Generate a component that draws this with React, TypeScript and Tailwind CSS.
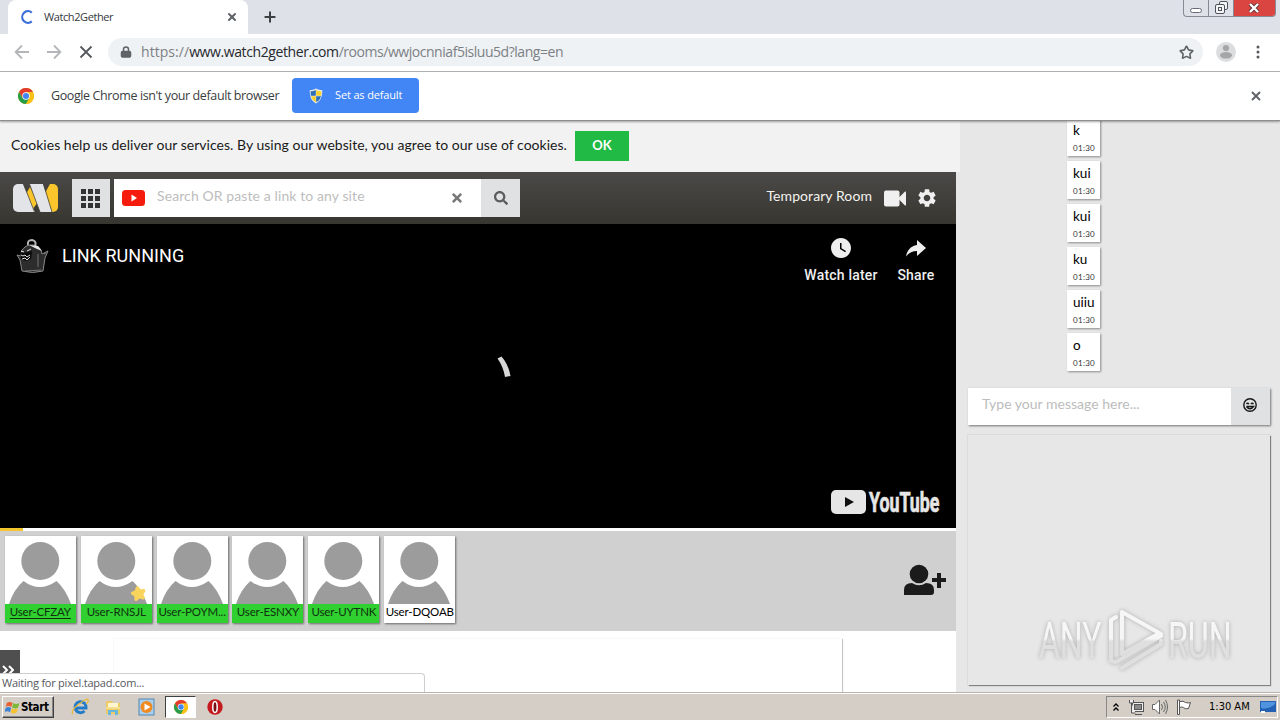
import { Lock, Plus, Star, X } from 'lucide-react';
import { FaSearch, FaTimes } from 'react-icons/fa';
import { MdSettings, MdWatchLater } from 'react-icons/md';

interface RoomUser {
  name: string;
  active: boolean;
  self?: boolean;
  starred?: boolean;
}

const users: RoomUser[] = [
  { name: 'User-CFZAY', active: true, self: true },
  { name: 'User-RNSJL', active: true, starred: true },
  { name: 'User-POYM...', active: true },
  { name: 'User-ESNXY', active: true },
  { name: 'User-UYTNK', active: true },
  { name: 'User-DQOAB', active: false },
];

const messages = ['k', 'kui', 'kui', 'ku', 'uiiu', 'o'];

const ChromeLogo = ({ className }: { className: string }) => (
  <svg viewBox="0 0 24 24" className={className}>
    <circle cx="12" cy="12" r="12" fill="#fbc116" />
    <path d="M12 6h10.4A12 12 0 0 0 1.6 6L6.8 15z" fill="#e33b2e" />
    <path d="M1.6 6A12 12 0 0 0 12 24l5.2-9L12 12 6.8 15z" fill="#2a9d4b" />
    <path d="M22.4 6A12 12 0 0 1 12 24l5.2-9a6 6 0 0 0-5.2-9z" fill="#fbc116" />
    <circle cx="12" cy="12" r="5.600" fill="#fff" />
    <circle cx="12" cy="12" r="4.600" fill="#4384f3" />
  </svg>
);

const Shield = () => (
  <svg viewBox="0 0 16 16" className="h-4 w-4">
    <path d="M8 .6c2 1.3 4.200 1.700 6.300 1.700 0 6-1.300 10.500-6.300 13.100C3 12.800 1.700 8.300 1.700 2.300 3.800 2.300 6 1.900 8 .6z" fill="#e8edf2" />
    <path d="M7.800 2v5.800H2.900C2.700 6.500 2.600 5 2.600 3.300 4.500 3.200 6.200 2.900 7.800 2z" fill="#2c6fb5" />
    <path d="M8.200 2v5.800h4.900c.2-1.300.3-2.800.3-4.500C11.500 3.200 9.800 2.900 8.200 2z" fill="#f6d12e" />
    <path d="M7.800 8.200v6C5.200 12.700 3.700 10.800 3 8.200z" fill="#f6d12e" />
    <path d="M8.200 8.200v6c2.600-1.500 4.100-3.400 4.800-6z" fill="#2c6fb5" />
  </svg>
);

const NavArrow = ({ className = '' }: { className?: string }) => (
  <svg viewBox="0 0 16 16" className={`h-4 w-4 ${className}`} fill="none" stroke="#b4b6b9" strokeWidth="1.8">
    <path d="M15 8H2M8 1.500 1.600 8 8 14.500" />
  </svg>
);

const TabStrip = () => (
  <div className="flex h-[34px] shrink-0 items-start bg-[#dee1e8] pl-2">
    <div className="flex h-[34px] w-60 items-center rounded-t-lg bg-white pl-3 pr-[10px]">
      <svg viewBox="0 0 14 14" className="h-[14px] w-[14px]" fill="none" stroke="#3b6fd8" strokeWidth="2.200">
        <path d="M11.800 2.600A5.800 5.800 0 1 0 11.800 11.400" />
      </svg>
      <span className="ml-[10px] flex-1 text-[11px] leading-4 tracking-[-0.4px] text-[#35383c]">Watch2Gether</span>
      <X className="h-3 w-3 text-[#5f6368]" strokeWidth={4} />
    </div>
    <Plus className="ml-[14px] mt-[9px] h-4 w-4 text-[#3c4043]" strokeWidth={3} />
    <div className="ml-auto mr-1 flex h-[17px] w-[93px] overflow-hidden rounded-b border border-t-0 border-[#858a93]">
      <div className="flex w-[25px] items-end justify-center border-r border-[#858a93] pb-[3px]">
        <div className="h-[5px] w-3 rounded-sm border border-[#666b75] bg-white" />
      </div>
      <div className="flex w-[25px] items-center justify-center border-r border-[#858a93]">
        <svg viewBox="0 0 13 13" className="-mt-px h-[13px] w-[13px]" fill="#f4f5f7" stroke="#4d525c">
          <rect x="4.500" y=".5" width="8" height="8" rx="1.500" />
          <rect x=".5" y="3.500" width="9" height="9" rx="1.500" />
          <rect x="3.500" y="6.500" width="3" height="3" />
        </svg>
      </div>
      <div className="flex flex-1 items-center justify-center bg-[#da4542]">
        <svg viewBox="0 0 12 10" className="-ml-px h-[10px] w-3">
          <path d="m2 1 8 8m0-8L2 9" stroke="#5c3236" strokeWidth="4" />
          <path d="m2 1 8 8m0-8L2 9" stroke="#fff" strokeWidth="2.400" />
        </svg>
      </div>
    </div>
  </div>
);

const AddressBar = () => (
  <div className="flex h-[38px] shrink-0 items-center border-b border-[#b3b4b5] bg-white pb-px pl-[14px]">
    <NavArrow />
    <NavArrow className="ml-4 rotate-180" />
    <svg viewBox="0 0 14 14" className="ml-[17px] h-[14px] w-[14px]" stroke="#54575b" strokeWidth="1.800">
      <path d="m1.500 1.500 11 11m0-11-11 11" />
    </svg>
    <div className="ml-[15px] flex h-7 w-[1095px] items-center rounded-full bg-[#eff2f5] pl-3 pr-[9px]">
      <Lock className="h-3 w-3 text-[#5f6368] [&>rect]:fill-[#5f6368]" strokeWidth={3} />
      <span className="ml-[9px] flex-1 pb-px text-[14px] leading-5 text-[#7c8084]">
        <span className="tracking-[0.050px]">https://</span>
        <span className="tracking-[-0.4px] text-[#25282c]">www.watch2gether.com</span>
        <span className="tracking-[-0.460px]">/rooms/wwjocnniaf5isluu5d?lang=en</span>
      </span>
      <Star className="h-[15px] w-[15px] text-[#5f6368]" strokeWidth={2.6} />
    </div>
    <svg viewBox="0 0 20 20" className="ml-[13px] h-5 w-5">
      <circle cx="10" cy="10" r="10" fill="#dcdddf" />
      <circle cx="10" cy="6" r="3.100" fill="#a5a6a8" />
      <ellipse cx="10" cy="13.300" rx="6" ry="3.300" fill="#a5a6a8" />
    </svg>
    <svg viewBox="0 0 4 14" className="ml-5 h-[14px] w-1" fill="#55585c">
      <circle cx="2" cy="2" r="1.500" />
      <circle cx="2" cy="7" r="1.500" />
      <circle cx="2" cy="12" r="1.500" />
    </svg>
  </div>
);

const DefaultBrowserBar = () => (
  <div className="z-10 flex h-[49px] shrink-0 items-center border-b border-[#8e8e90] bg-white pb-px pl-[18px] pr-[17px] shadow-[0_1px_2px_rgba(0,0,0,0.35)]">
    <ChromeLogo className="h-4 w-4" />
    <span className="ml-[17px] w-[241px] whitespace-nowrap pt-px text-[12.500px] tracking-[-0.390px] text-[#3a3d40]">
      Google Chrome isn't your default browser
    </span>
    <button className="flex h-[35px] w-[127px] items-center rounded bg-[#4285f4] pl-4 text-[11px] text-white">
      <Shield />
      <span className="ml-[11px] tracking-[-0.150px]">Set as default</span>
    </button>
    <X className="ml-auto h-[14px] w-[14px] text-[#5f6368]" strokeWidth={3.2} />
  </div>
);

const CookieBar = () => (
  <div className="flex h-[51px] w-[960px] items-center bg-[#f2f2f2] pb-[2px] pl-[11px] font-['Lato',sans-serif]">
    <span className="w-[564px] whitespace-nowrap pb-[2px] text-[14px] tracking-[0.030px] text-[#1a1a1a]">
      Cookies help us deliver our services. By using our website, you agree to our use of cookies.
    </span>
    <button className="h-[30px] w-[54px] bg-[#21ba45] text-[13px] font-bold text-white">OK</button>
  </div>
);

const Header = () => (
  <div className="flex h-[52px] items-center bg-linear-to-b from-[#4b4947] to-[#373630] pl-[13px] font-['Lato',sans-serif]">
    <svg viewBox="0 0 46 28" className="h-7 w-[46px]">
      <path d="M17 3 13 10l6 16 6-8z" fill="#fac62c" />
      <path d="M37 0h3a5 5 0 0 1 5 5v18a5 5 0 0 1-5 5h-1L32 9z" fill="#fac62c" />
      <path d="M0 5a5 5 0 0 1 5-5h5l12 28H5a5 5 0 0 1-5-5z" fill="#e3e4e8" />
      <path d="M16.500 0H30l9 28H27z" fill="#e3e4e8" />
      <path d="m10.500 0 11 28M16.500 0 27 28M30.500 0l8.500 28" fill="none" stroke="#4a4539" strokeWidth=".8" />
    </svg>
    <div className="ml-[13px] flex h-[38px] w-[38px] items-center justify-center bg-[#e0e1e2] pr-px">
      <div className="grid grid-cols-3 gap-[2px]">
        {Array.from({ length: 9 }, (_, i) => (
          <div key={i} className="h-[5px] w-[5px] bg-[#333]" />
        ))}
      </div>
    </div>
    <div className="ml-1 flex h-[38px] w-[367px] items-center bg-white pl-2 pr-[17px]">
      <svg viewBox="0 0 23 16" className="h-4 w-[23px]">
        <rect width="23" height="16" rx="3.500" fill="#f61c0d" />
        <path d="m9.500 4.500 5.500 3.500-5.500 3.500z" fill="#fff" />
      </svg>
      <span className="mb-[5px] ml-3 flex-1 text-[14px] tracking-[0.1px] text-[#bdbdbd]">
        Search OR paste a link to any site
      </span>
      <FaTimes className="h-[14px] w-[14px] text-[#777]" />
    </div>
    <div className="flex h-[38px] w-[39px] items-center justify-center bg-[#e0e1e2]">
      <FaSearch className="h-[14px] w-[14px] text-[#5c5c5d]" />
    </div>
    <span className="mb-[5px] ml-auto whitespace-nowrap text-[14px] tracking-[0.080px] text-[#f3f3ef]">Temporary Room</span>
    <svg viewBox="0 0 22 17" className="ml-3 h-[17px] w-[22px]" fill="#f0f0f0">
      <rect y=".5" width="15.500" height="16" rx="2" />
      <path d="m14 8.500 7-7q1-.5 1 1v12q0 1.500-1 1z" />
    </svg>
    <MdSettings className="ml-[10px] mr-[18px] h-[22px] w-[22px] text-[#f0f0f0]" />
  </div>
);

const Player = () => (
  <div className="flex h-[304px] flex-col bg-black font-['Roboto',sans-serif] text-[#eee]">
    <div className="flex h-[130px] items-start pl-[14px]">
      <svg viewBox="0 0 36 38" className="mt-[13px] h-[38px] w-9">
        <path d="M7 15q4-8 12-7 8 1 9 9l6-3-3 7-2 13q-10 3-21 0L6 23l-3-5 4 1z" fill="#2c2c2c" stroke="#8a8a8a" strokeWidth="1" />
        <path d="M14 8q-1-5 4-5 5 1 3 6" fill="none" stroke="#b5b5b5" strokeWidth="2" />
        <path d="M6 15q4 2 12-1l-1 8-5 2-5-2z" fill="#090909" />
        <path d="m7 14 3 1m3-1 4-2M7 18l2 1 2-1 2 2 3-2M8 22l3-1 2 2 3-3" fill="none" stroke="#ddd" strokeWidth="1" />
        <path d="m15 8 9 1 4 5-5-2z" fill="#e7e7e7" />
        <path d="M24 17v13m-13 4 16-1M30 17l2-1" stroke="#777" fill="none" />
      </svg>
      <span className="ml-3 mt-5 text-[18px] leading-6 tracking-[0.050px] text-white">LINK RUNNING</span>
      <div className="ml-auto mt-3 flex w-[90px] flex-col items-center">
        <MdWatchLater className="h-6 w-6" />
        <span className="mt-[5px] whitespace-nowrap text-[14px] leading-5 font-medium tracking-[0.2px]">Watch later</span>
      </div>
      <div className="mr-[10px] mt-3 flex w-[60px] flex-col items-center">
        <svg viewBox="0 0 24 24" className="h-6 w-6" fill="#eee">
          <path d="M13 4v5C6 10 3 15 2 20.500 5 16.500 8.500 15 13 15v5l9-8z" />
        </svg>
        <span className="mt-[5px] text-[14px] leading-5 font-medium tracking-[0.2px]">Share</span>
      </div>
    </div>
    <svg viewBox="0 0 16 24" className="ml-[496px] h-6 w-4 shrink-0" fill="#d8d8d8">
      <path d="M1.500 4.500 5.500 2.500Q12.500 10.500 14.500 22L9 23Q7.500 13 1.500 4.500z" />
    </svg>
    <div className="mt-auto flex items-center justify-end pb-2 pr-3">
      <svg viewBox="0 0 114 36" className="h-9 w-[114px]">
        <rect x="1" y="6" width="35" height="24" rx="5" fill="#e6e6e6" />
        <path d="m15 13 9 5-9 5z" fill="#111" />
        <text transform="translate(39 28) scale(0.660 1)" fontSize="27" fontWeight="700" fill="#e6e6e6" stroke="#e6e6e6" strokeWidth=".7">YouTube</text>
      </svg>
    </div>
  </div>
);

const UserCard = ({ user }: { user: RoomUser }) => (
  <div className="relative flex h-[87px] w-[71px] flex-col bg-white shadow-[1px_1px_2px_rgba(0,0,0,0.5)]">
    <svg viewBox="0 0 71 68" className="h-[68px] w-[71px]" fill="#9c9c9c">
      <circle cx="35.300" cy="25" r="19" />
      <path d="M4 68Q9 53 18.500 45q16 12 33 0 9 8 14.500 23z" />
    </svg>
    {user.starred && (
      <Star className="absolute bottom-[22px] right-[6px] h-[15px] w-[15px] -rotate-12 fill-[#f9d45c] text-[#f9d45c]" strokeWidth={4} />
    )}
    <div
      className={`flex h-[19px] justify-center whitespace-nowrap text-[11.500px] leading-[16px] tracking-[-0.150px] ${
        user.active ? 'bg-[#2fd02f] text-[#10300f]' : 'bg-white text-black'
      } ${user.self ? 'underline underline-offset-2' : ''}`}
    >
      {user.name}
    </div>
  </div>
);

const UserList = () => (
  <div className="flex h-[100px] items-start gap-[4.900px] bg-[#d0d0d0] pl-[4.800px] pt-[5px] font-['Lato',sans-serif]">
    {users.map((user) => (
      <UserCard key={user.name} user={user} />
    ))}
    <svg viewBox="0 0 42 31" className="ml-auto mr-[10px] mt-[28px] h-[31px] w-[42px]" fill="#1b1b1b">
      <circle cx="15" cy="10" r="9.300" />
      <path d="M0 31v-5q0-7 8-7 7 4.500 14 0 8 0 8 7v2q0 3-3 3zM33 9h4v5h5v4h-5v6h-4v-6h-5v-4h5z" />
    </svg>
  </div>
);

const ChatMessage = ({ text }: { text: string }) => (
  <div className="h-[38px] w-[33px] bg-white pl-[6px] shadow-[1px_1px_2px_rgba(0,0,0,0.4)]">
    <div className="pt-[2px] text-[13.500px] leading-5 text-black">{text}</div>
    <div className="pt-[3px] text-[8px] leading-[10px] tracking-[0.3px] text-[#333]">01:30</div>
  </div>
);

const Watermark = () => (
  <svg viewBox="0 0 204 70" className="h-[70px] w-[204px] drop-shadow-[0_0_2px_rgba(0,0,0,0.25)]">
    <defs>
      <linearGradient id="fade" x1="0" y1="0" x2="0" y2="70" gradientUnits="userSpaceOnUse">
        <stop offset="0.480" stopColor="#f6f6f6" />
        <stop offset="0.520" stopColor="#dfdfdf" />
      </linearGradient>
      <linearGradient id="fadeText" x1="0" y1="-53" x2="0" y2="17" gradientUnits="userSpaceOnUse">
        <stop offset="0.480" stopColor="#f6f6f6" />
        <stop offset="0.520" stopColor="#dfdfdf" />
      </linearGradient>
    </defs>
    <g fill="url(#fadeText)" fontFamily="Roboto, sans-serif" fontSize="50">
      <text transform="translate(5 53) scale(0.640 1)">ANY</text>
      <text transform="translate(134 53) scale(0.645 1)">RUN</text>
    </g>
    <g fill="none" stroke="url(#fade)" strokeWidth="4" strokeLinejoin="round" strokeLinecap="round">
      <path d="M82 12 77 15v41l5 1 45-26" />
      <path d="M127 29 88 7v42l36-20" />
      <path d="m88 63 39-24v-3" />
    </g>
  </svg>
);

const Sidebar = () => (
  <div className="flex w-[320px] flex-col bg-[#e7e7e7] pl-2 font-['Lato',sans-serif]">
    <div className="-mt-[3px] flex flex-col gap-[5px] pl-[99px]">
      {messages.map((text, i) => (
        <ChatMessage key={i} text={text} />
      ))}
    </div>
    <div className="mt-[17px] flex h-[37px] w-[302px] bg-white shadow-[1px_1px_2px_rgba(0,0,0,0.5)]">
      <span className="flex-1 pl-[14px] text-[14px] leading-[32px] tracking-[0.010px] text-[#bcbcbc]">Type your message here...</span>
      <div className="flex w-[39px] items-center justify-center bg-[#e0e1e2] pb-[4px] pr-[2px]">
        <svg viewBox="0 0 14 14" className="h-[14px] w-[14px]" fill="none" stroke="#171717" strokeWidth="1.400">
          <circle cx="7" cy="7" r="6.200" />
          <path d="M3.500 6q1-1.500 2.500 0M8 6q1-1.500 2.500 0M3.500 8.500h7Q7 13 3.500 8.500" />
        </svg>
      </div>
    </div>
    <div className="mt-[10px] flex h-[250px] w-[302px] items-end bg-[#e7e7e7] pb-[10px] pl-[66px] shadow-[0_0_1px_rgba(0,0,0,0.3),1px_1px_1px_rgba(0,0,0,0.4)]">
      <Watermark />
    </div>
  </div>
);

const BelowFold = () => (
  <div className="relative flex h-[61px] items-end bg-white">
    <div className="mb-[17px] flex h-[25px] w-5 items-end bg-[#4f4f50] pl-[2px]">
      <svg viewBox="0 0 12 10" className="h-[10px] w-3" fill="none" stroke="#fff" strokeWidth="2">
        <path d="m1 1 4 4-4 4m6-8 4 4-4 4" />
      </svg>
    </div>
    <div className="ml-[94px] h-[53px] w-[729px] border-r border-[#c4c4c4] bg-white shadow-[0_0_2px_rgba(0,0,0,0.08)]" />
    <div className="absolute bottom-0 left-0 h-[19px] w-[425px] rounded-tr border-r border-t border-[#cfcfcf] bg-white pl-[2px] text-[11px] leading-[18px] tracking-[-0.240px] text-[#55585b]">
      Waiting for pixel.tapad.com...
    </div>
  </div>
);

const Taskbar = () => (
  <div className="flex h-7 shrink-0 items-center border-t border-[#b9b5ae] bg-[#d4cec6] font-['DejaVu_Sans_Condensed','DejaVu_Sans',sans-serif] shadow-[inset_0_1px_0_#fff]">
    <button className="ml-[2px] mt-px flex h-[22px] w-[52px] items-center border border-b-[#404040] border-l-white border-r-[#404040] border-t-white pl-[2px] text-[11.500px] font-bold text-black shadow-[inset_-1px_-1px_0_#888]">
      <svg viewBox="0 0 16 16" className="h-[15px] w-[15px]">
        <path d="M2 3q3-2 6 0L6.800 7.500q-3-2-6 0z" fill="#e86032" />
        <path d="M8.800 3.300q3 2 6.500 0L14 8q-3 2-6.500 0z" fill="#7db83a" />
        <path d="M.6 8.500q3-2 6 0L5.300 13q-3-2-6 0z" fill="#3e83d5" />
        <path d="M7.300 8.800q3 2 6.500 0l-1.300 4.500q-3 2-6.500 0z" fill="#f5c32f" />
      </svg>
      <span className="ml-px pt-px tracking-[-0.4px]">Start</span>
    </button>
    <svg viewBox="0 0 18 18" className="ml-[17px] h-[18px] w-[18px]" fill="none">
      <path d="M4 10h11A5.500 5.500 0 1 0 13.500 13" stroke="#227ac9" strokeWidth="3" />
      <path d="M2 16Q-1 13 8 6t9-4q1 2-2 4" stroke="#e8b93a" strokeWidth="1.300" />
    </svg>
    <svg viewBox="0 0 18 18" className="ml-[15px] h-[18px] w-[18px]">
      <path d="M2 3h6l1 2h7v11H2z" fill="#eacb68" />
      <path d="M4 5h10v4H4z" fill="#fff6cf" />
      <path d="M2 9h14v2H2z" fill="#f6df91" />
      <path d="M4 17v-5h10v5h-3v-3H7v3z" fill="#68b7df" />
    </svg>
    <svg viewBox="0 0 18 18" className="ml-[16px] h-[18px] w-[18px]">
      <rect x="1" y="1" width="15" height="16" fill="#a9cfee" stroke="#5286b2" />
      <circle cx="8.500" cy="9" r="6" fill="#ef8b20" />
      <path d="m6.500 5.500 6 3.500-6 3.500z" fill="#fff" />
    </svg>
    <div className="ml-[9px] flex h-[22px] w-[31px] items-center justify-center border border-b-white border-l-[#404040] border-r-white border-t-[#404040] bg-white">
      <ChromeLogo className="h-[14px] w-[14px]" />
    </div>
    <svg viewBox="0 0 16 16" className="ml-[11px] h-4 w-4">
      <circle cx="8" cy="8" r="7.700" fill="#c4191d" />
      <ellipse cx="8" cy="8" rx="2.200" ry="5.500" fill="#761012" stroke="#fff" strokeWidth="1.500" />
    </svg>
    <div className="ml-auto mr-[2px] mt-px flex h-[22px] w-[172px] items-center border border-b-white border-l-[#888] border-r-white border-t-[#888] pl-[6px] text-[11px] text-black">
      <svg viewBox="0 0 6 8" className="h-2 w-[6px]" fill="none" stroke="#000" strokeWidth="1.300">
        <path d="m.5 3.500 2.500-2.500 2.500 2.500m-5 4L3 5l2.500 2.500" />
      </svg>
      <svg viewBox="0 0 16 16" className="ml-[9px] h-4 w-4" fill="#eee" stroke="#555">
        <rect x="4.500" y="3.500" width="11" height="9" />
        <rect x="6.500" y="5.500" width="7" height="5" fill="#8b8b8b" />
        <path d="M7 15.500h7M1.500 1v3h4V1m-2 3v10h4" />
      </svg>
      <svg viewBox="0 0 16 16" className="ml-2 h-4 w-4" fill="#fff" stroke="#666">
        <path d="M.5 5.500H3L7.500 1v14L3 10.500H.5z" />
        <path d="M9.500 5q2 3 0 6m2-8q3.500 5 0 10m2-12q4 7 0 14" fill="none" />
      </svg>
      <svg viewBox="0 0 16 16" className="ml-2 h-4 w-4" fill="#fff" stroke="#555">
        <path d="M3.500 2.500q4-1 6 1 3 1 5 0l-2 6q-4 1-5-1-2-1-4 0zM1.500 1v14.500h2V1z" />
      </svg>
      <span className="ml-[17px] whitespace-nowrap pt-px">1:30 AM</span>
      <svg viewBox="0 0 16 14" className="ml-auto mr-px h-[14px] w-4">
        <rect width="16" height="11" y="1" fill="#2461b4" />
        <path d="M1 2h14v2Q8 10 1 8z" fill="#5094df" />
        <path d="M1 11h4v2H1z" fill="#fff" />
      </svg>
    </div>
  </div>
);

const App = () => (
  <div className="flex h-[720px] w-[1280px] flex-col overflow-hidden bg-white font-['Open_Sans',sans-serif]">
    <TabStrip />
    <AddressBar />
    <DefaultBrowserBar />
    <div className="flex h-[571px] shrink-0 overflow-hidden">
      <div className="w-[960px] bg-[#e7e7e7]">
        <CookieBar />
        <div className="w-[956px]">
          <Header />
          <Player />
          <div className="h-[3px] bg-white">
            <div className="h-full w-[23px] bg-[#f3c62f]" />
          </div>
          <UserList />
          <BelowFold />
        </div>
      </div>
      <Sidebar />
    </div>
    <Taskbar />
  </div>
);

export default App;
